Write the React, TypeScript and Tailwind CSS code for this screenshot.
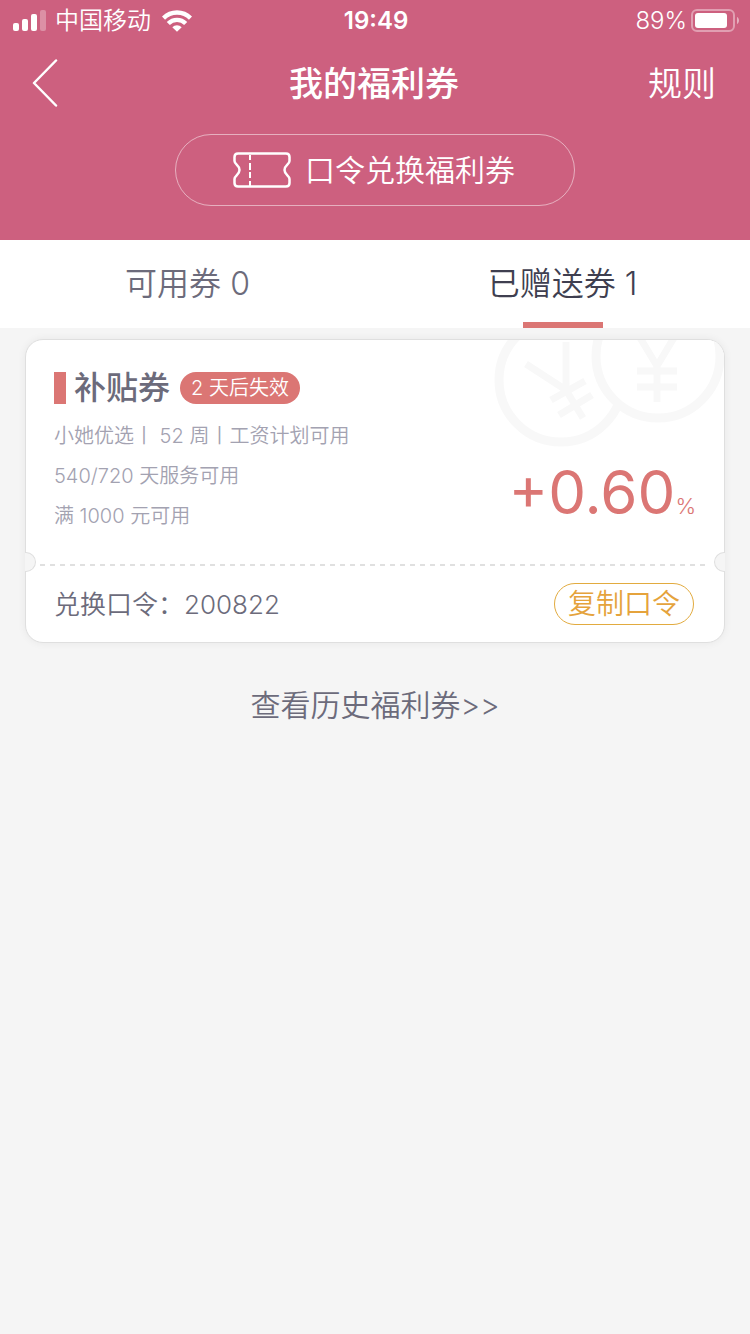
function SignalIcon() {
  return (
    <svg viewBox="0 0 34 22" className="h-[22px] w-[34px]" fill="#fff" aria-hidden="true">
      <rect x="0" y="13" width="6" height="8" rx="2" />
      <rect x="9" y="9" width="6" height="12" rx="2" />
      <rect x="18" y="4" width="6" height="17" rx="2" />
      <rect x="27" y="0" width="6" height="21" rx="2" opacity="0.3" />
    </svg>
  );
}

function WifiIcon() {
  return (
    <svg viewBox="0 0 30 22" className="h-[22px] w-[30px]" fill="none" stroke="#fff" strokeWidth="4.4" aria-hidden="true">
      <path d="M1.500 8.100a19.200 19.200 0 0 1 27 0" />
      <path d="M6.300 13.500a12.300 12.300 0 0 1 17.400 0" />
      <path d="M15 21.800l-4.700-4.500a6.700 6.700 0 0 1 9.400 0z" fill="#fff" stroke="none" />
    </svg>
  );
}

function BatteryIcon() {
  return (
    <svg viewBox="0 0 48 24" className="h-6 w-12" aria-hidden="true">
      <rect x="1" y="1" width="42" height="21" rx="5" fill="none" stroke="#fff" strokeWidth="2" opacity="0.4" />
      <rect x="4" y="4" width="32" height="15" rx="3" fill="#fff" />
      <path d="M46 8v7c1.300-.6 2-2 2-3.500s-.7-2.900-2-3.500z" fill="#fff" opacity="0.5" />
    </svg>
  );
}

function TicketIcon() {
  return (
    <svg viewBox="0 0 58 36" className="h-9 w-[58px]" fill="none" stroke="#fff" strokeWidth="2.500" strokeLinejoin="round" aria-hidden="true">
      <path d="M5 1.500H53Q56.500 1.500 56.500 5V9C56.500 12.500 51.500 13 51.500 18S56.500 23.500 56.500 27V31Q56.500 34.500 53 34.500H5Q1.500 34.500 1.500 31V27C1.500 23.500 6.500 23 6.500 18S1.500 12.500 1.500 9V5Q1.500 1.500 5 1.500Z" />
      <path d="M17 3v5M17 11v7M17 20v6M17 29v5" strokeWidth="2" />
    </svg>
  );
}

function CoinsArt() {
  return (
    <svg viewBox="490 340 234 110" className="absolute top-0 right-0 h-[110px] w-[234px] rounded-tr-[17px]" fill="none" stroke="#f8f8f8" aria-hidden="true">
      <circle cx="561" cy="380" r="62" strokeWidth="9" />
      <path d="M526 364L566 390M566 342V390L583 418M551 400L585 381M559 415L592 395" strokeWidth="7" />
      <circle cx="658" cy="356" r="62" strokeWidth="9" fill="#fff" />
      <path d="M639 336L657 366L675 336M657 366V402M637 371H677M637 387H677" strokeWidth="7" />
    </svg>
  );
}

function StatusBar() {
  return (
    <div className="grid h-[42px] grid-cols-3 items-center pr-[11px] pl-[13px] text-2xl">
      <div className="flex items-center">
        <SignalIcon />
        <span className="ml-2 font-[350] whitespace-nowrap">中国移动</span>
        <span className="ml-[11px]">
          <WifiIcon />
        </span>
      </div>
      <span className="text-center font-semibold">19:49</span>
      <div className="flex items-center justify-end gap-1">
        <span className="font-[350]">89%</span>
        <BatteryIcon />
      </div>
    </div>
  );
}

function Tab({ label, count, active = false }: { label: string; count: number; active?: boolean }) {
  return (
    <button
      type="button"
      role="tab"
      aria-selected={active}
      className={
        active
          ? "flex flex-1 flex-col items-center text-[32px] font-[350] text-[#3f3f50]"
          : "flex flex-1 flex-col items-center text-[32px] font-[350] text-[#6c6b7b]"
      }
    >
      <span className="pt-[6px] leading-[76px]">
        {label} {count}
      </span>
      {active && <span className="h-[6px] w-20 bg-[#db7674]" />}
    </button>
  );
}

function CouponCard() {
  return (
    <article className="relative mx-[25px] mt-[11px] rounded-[18px] border border-[#dfdfdf] bg-white shadow-[0_0_8px_rgba(0,0,0,0.06)]">
      <CoinsArt />
      <div className="relative px-7 pt-8 pb-7">
        <div className="flex items-center">
          <span className="h-8 w-3 bg-[#db7674]" />
          <h2 className="ml-2 text-[32px] leading-8 font-medium text-[#6c6b7b]">补贴券</h2>
          <span className="ml-[10px] rounded-full bg-[#db7674] px-[11px] text-xl leading-8 font-[350] text-white">2 天后失效</span>
        </div>
        <div className="mt-3 flex items-end justify-between">
          <ul className="text-xl leading-10 font-[350] text-[#a3a2b1]">
            <li>小她优选丨 52 周丨工资计划可用</li>
            <li>540/720 天服务可用</li>
            <li>满 1000 元可用</li>
          </ul>
          <p className="flex items-baseline leading-[60px] text-[#db7674]">
            <span className="text-[60px]">+0.60</span>
            <span className="text-[22px] font-light">%</span>
          </p>
        </div>
      </div>
      <div className="relative">
        <span className="absolute -top-[12px] -left-px h-5 w-[11px] rounded-r-full border border-l-0 border-[#dfdfdf] bg-[#f5f5f5]" />
        <span className="absolute -top-[12px] -right-px h-5 w-[11px] rounded-l-full border border-r-0 border-[#dfdfdf] bg-[#f5f5f5]" />
        <svg className="block h-[2px] w-full px-[14px]" aria-hidden="true">
          <line x1="0" y1="1" x2="100%" y2="1" stroke="#e0e0e0" strokeWidth="2" strokeDasharray="5 5" />
        </svg>
      </div>
      <div className="flex items-center justify-between py-[17px] pr-[30px] pl-7">
        <p className="text-[26px] font-[350] text-[#6c6b7b]">兑换口令：200822</p>
        <button type="button" className="h-[42px] w-[140px] rounded-full border border-[#e2ab3f] text-[28px] leading-10 font-[350] text-[#e5a33c]">
          复制口令
        </button>
      </div>
    </article>
  );
}

export default function App() {
  return (
    <div className="min-h-screen bg-[#f5f5f5] font-['Inter','Noto_Sans_CJK_SC',sans-serif]">
      <header className="bg-[#cd607f] pb-[34px] text-white">
        <StatusBar />
        <nav className="grid h-[92px] grid-cols-3 items-center pr-[34px] pb-[10px] pl-8">
          <button type="button" aria-label="返回" className="w-fit">
            <svg viewBox="0 0 26 48" className="h-12 w-[26px]" fill="none" stroke="#fff" strokeWidth="2.500" strokeLinecap="round" strokeLinejoin="round" aria-hidden="true">
              <path d="M24 1.500L2 24L24 46.500" />
            </svg>
          </button>
          <h1 className="text-center text-[34px] font-medium whitespace-nowrap">我的福利券</h1>
          <a href="#rules" className="justify-self-end text-[34px] font-[350]">规则</a>
        </nav>
        <button type="button" className="mx-auto flex h-[72px] w-[400px] items-center justify-center gap-[14px] rounded-full border border-white/50 pr-[2px] text-3xl font-[350]">
          <TicketIcon />
          <span>口令兑换福利券</span>
        </button>
      </header>
      <div role="tablist" className="flex h-[88px] bg-white">
        <Tab label="可用券" count={0} />
        <Tab label="已赠送券" count={1} active />
      </div>
      <main>
        <CouponCard />
        <p className="mt-10 text-center">
          <a href="#history" className="text-3xl leading-[44px] font-[350] text-[#6c6b7b]">查看历史福利券&gt;&gt;</a>
        </p>
      </main>
    </div>
  );
}
